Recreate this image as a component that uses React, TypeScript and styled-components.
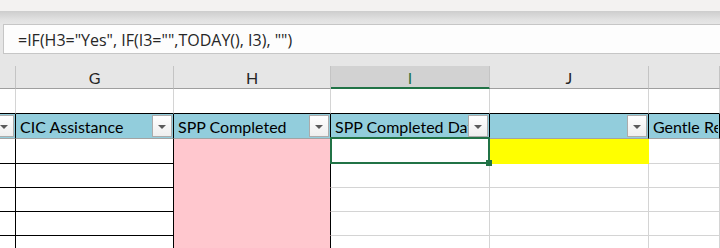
import * as React from "react";
import styled, { createGlobalStyle, css } from "styled-components";

const GlobalStyle = createGlobalStyle`
  *, *::before, *::after {
    box-sizing: border-box;
  }
  body {
    margin: 0;
    background: #ffffff;
    overflow: hidden;
  }
`;

const Window = styled.div`
  display: flex;
  flex-direction: column;
  width: 720px;
  height: 248px;
  overflow: hidden;
  background: #e6e6e6;

  & > * {
    flex: none;
  }
`;

const TitleStrip = styled.div`
  height: 11px;
  background: #f3f2f1;
`;

const RibbonShade = styled.div`
  height: 13px;
  background: linear-gradient(#cdcdcd, #e2e2e2 70%, #e6e6e6);
`;

const FormulaRow = styled.div`
  display: flex;
  height: 30px;
  padding-left: 3px;
`;

const FormulaBox = styled.div`
  flex: 1;
  display: flex;
  align-items: center;
  padding: 1px 0 0 14px;
  background: #fdfdfd;
  border: 1px solid #c6c6c6;
  border-right: none;
  color: #262626;
  font-family: "Open Sans", "Noto Sans", sans-serif;
  font-size: 16px;
  white-space: pre;
`;

const Gap = styled.div`
  height: 12px;
`;

const Sheet = styled.div`
  display: flex;
  flex-direction: column;
  background: #ffffff;
  font-family: Lato, "Liberation Sans", sans-serif;
`;

const Row = styled.div<{ $h: number }>`
  flex: none;
  display: grid;
  grid-template-columns: 16px 158px 157px 159px 159px 1fr;
  height: ${(p) => p.$h}px;
`;

const ColHead = styled.div<{ $active?: boolean }>`
  display: flex;
  align-items: center;
  justify-content: center;
  padding-top: 1px;
  background: #e6e6e6;
  border-right: 1px solid #c4c4c4;
  border-bottom: 1px solid #9f9f9f;
  color: #262626;
  font-size: 16px;
  ${(p) =>
    p.$active &&
    css`
      background: #d2d2d2;
      color: #217346;
      border-bottom: 2px solid #217346;
    `}
`;

const BlankCell = styled.div`
  border-right: 1px solid #d4d4d4;
  border-bottom: 1px solid #000000;
`;

const HeadCell = styled.div<{ $clip?: boolean }>`
  display: flex;
  align-items: center;
  justify-content: ${(p) => (p.$clip ? "flex-end" : "space-between")};
  min-width: 0;
  overflow: hidden;
  padding: 0 1px 0 4px;
  background: #92cddc;
  border-right: 1px solid #000000;
  border-bottom: 1px solid #a3a3a3;
  color: #000000;
  font-size: 16px;
  ${(p) =>
    p.$clip &&
    css`
      padding: 0 1px 0 0;
    `}
`;

const HeadText = styled.span`
  flex: 1;
  min-width: 0;
  overflow: hidden;
  white-space: nowrap;
`;

const FilterButton = styled.span`
  flex: none;
  display: flex;
  align-items: center;
  justify-content: center;
  width: 20px;
  height: 22px;
  background: linear-gradient(#ffffff, #eeeeee);
  border: 1px solid #ababab;

  &::after {
    content: "";
    border-left: 4px solid transparent;
    border-right: 4px solid transparent;
    border-top: 4px solid #5a5a5a;
    margin-top: 1px;
  }
`;

const BoxCell = styled.div`
  border-right: 1px solid #000000;
  border-bottom: 1px solid #000000;
`;

const FillCell = styled.div<{ $fill: string; $edge: string }>`
  background: ${(p) => p.$fill};
  border-right: 1px solid ${(p) => p.$edge};
  border-bottom: 1px solid ${(p) => p.$fill};
`;

const GridCell = styled.div<{ $active?: boolean }>`
  position: relative;
  border-right: 1px solid #d4d4d4;
  border-bottom: 1px solid #d4d4d4;
  ${(p) =>
    p.$active &&
    css`
      &::before {
        content: "";
        position: absolute;
        top: -2px;
        left: -1px;
        right: -1px;
        bottom: -1px;
        border: 2px solid #217346;
        z-index: 1;
      }
      &::after {
        content: "";
        position: absolute;
        right: -3px;
        bottom: -3px;
        width: 6px;
        height: 6px;
        background: #217346;
        z-index: 2;
      }
    `}
`;

const letters = ["", "G", "H", "I", "J", ""];
const heights = [24, 24, 24, 24];

export default function App() {
  return (
    <Window>
      <GlobalStyle />
      <TitleStrip />
      <RibbonShade />
      <FormulaRow>
        <FormulaBox>{'=IF(H3="Yes", IF(I3="",TODAY(), I3), "")'}</FormulaBox>
      </FormulaRow>
      <Gap />
      <Sheet>
        <Row $h={23}>
          {letters.map((l, i) => (
            <ColHead key={i} $active={l === "I"}>
              {l}
            </ColHead>
          ))}
        </Row>
        <Row $h={25}>
          {letters.map((_, i) => (
            <BlankCell key={i} />
          ))}
        </Row>
        <Row $h={25}>
          <HeadCell $clip>
            <FilterButton />
          </HeadCell>
          <HeadCell>
            <HeadText>CIC Assistance</HeadText>
            <FilterButton />
          </HeadCell>
          <HeadCell>
            <HeadText>SPP Completed</HeadText>
            <FilterButton />
          </HeadCell>
          <HeadCell>
            <HeadText>SPP Completed Date</HeadText>
            <FilterButton />
          </HeadCell>
          <HeadCell>
            <HeadText />
            <FilterButton />
          </HeadCell>
          <HeadCell>
            <HeadText>Gentle Reminder Sent</HeadText>
          </HeadCell>
        </Row>
        <Row $h={25}>
          <BoxCell />
          <BoxCell />
          <FillCell $fill="#ffc7ce" $edge="#000000" />
          <GridCell $active />
          <FillCell $fill="#ffff00" $edge="#ffff00" />
          <GridCell />
        </Row>
        {heights.map((h, r) => (
          <Row key={r} $h={h}>
            <BoxCell />
            <BoxCell />
            <FillCell $fill="#ffc7ce" $edge="#000000" />
            <GridCell />
            <GridCell />
            <GridCell />
          </Row>
        ))}
      </Sheet>
    </Window>
  );
}
